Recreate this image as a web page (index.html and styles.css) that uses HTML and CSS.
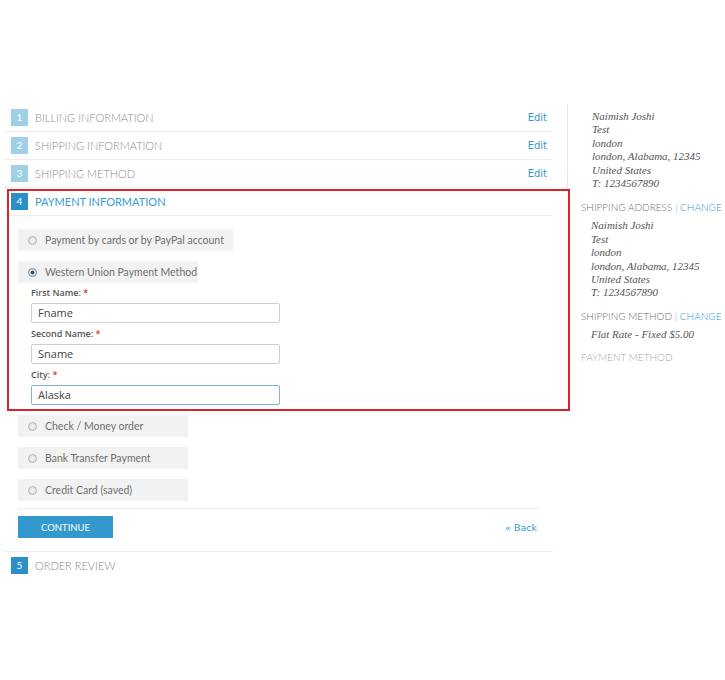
FILE: index.html
```html
<!DOCTYPE html>
<html>
<head>
<meta charset="utf-8">
<link rel="stylesheet" href="styles.css">
</head>
<body>
<div class="page">
  <div class="main">
    <div class="step done">
      <span class="num">1</span><span class="title">Billing Information</span><a class="edit">Edit</a>
    </div>
    <div class="step done">
      <span class="num">2</span><span class="title">Shipping Information</span><a class="edit">Edit</a>
    </div>
    <div class="step done">
      <span class="num">3</span><span class="title">Shipping Method</span><a class="edit">Edit</a>
    </div>
    <div class="step active">
      <span class="num">4</span><span class="title">Payment Information</span>
    </div>
    <div class="payment">
      <div class="methods">
        <div class="option wide"><span class="radio"></span>Payment by cards or by PayPal account</div>
        <div class="option mid"><span class="radio on"></span>Western Union Payment Method</div>
        <div class="fields">
          <div class="field">
            <label>First Name: <em>*</em></label>
            <div class="input">Fname</div>
          </div>
          <div class="field">
            <label>Second Name: <em>*</em></label>
            <div class="input">Sname</div>
          </div>
          <div class="field">
            <label>City: <em>*</em></label>
            <div class="input focus">Alaska</div>
          </div>
        </div>
        <div class="option"><span class="radio"></span>Check / Money order</div>
        <div class="option"><span class="radio"></span>Bank Transfer Payment</div>
        <div class="option"><span class="radio"></span>Credit Card (saved)</div>
      </div>
      <div class="actions">
        <button class="continue">Continue</button>
        <a class="back">« Back</a>
      </div>
    </div>
    <div class="step active last">
      <span class="num">5</span><span class="title grey">Order Review</span>
    </div>
  </div>
  <div class="side">
    <address class="addr first">Naimish Joshi<br>Test<br>london<br>london, Alabama, 12345<br>United States<br>T: 1234567890</address>
    <div class="shead">Shipping Address <span class="bar">|</span> <a>Change</a></div>
    <address class="addr">Naimish Joshi<br>Test<br>london<br>london, Alabama, 12345<br>United States<br>T: 1234567890</address>
    <div class="shead">Shipping Method <span class="bar">|</span> <a>Change</a></div>
    <address class="addr">Flat Rate - Fixed $5.00</address>
    <div class="shead light">Payment Method</div>
  </div>
  <div class="highlight"></div>
</div>
</body>
</html>
```
FILE: styles.css
```css
* { box-sizing: border-box; }
body {
  margin: 0;
  background: #fff;
  font-family: Lato, "Open Sans", sans-serif;
}
.page {
  position: relative;
  display: flex;
  padding-top: 104px;
  width: 725px;
  height: 680px;
}
.main {
  margin-left: 4px;
  width: 549px;
  flex: none;
}
.step {
  display: flex;
  align-items: center;
  height: 28px;
  padding-left: 7px;
  border-bottom: 1px solid #eeeeee;
}
.num {
  width: 17px;
  height: 17px;
  background: #9fd0e6;
  color: #fff;
  font-size: 10px;
  line-height: 17px;
  text-align: center;
  margin-right: 7px;
}
.step.active .num { background: #2b8fc9; }
.title {
  flex: 1;
  text-transform: uppercase;
  font-size: 11px;
  font-weight: 300;
  color: #8c8c8c;
  letter-spacing: 0;
}
.step.active .title { color: #3a9bd0; font-weight: 400; }
.step.active .title.grey { color: #888; font-weight: 300; }
.edit {
  font-family: "DejaVu Sans", sans-serif;
  font-size: 10px;
  color: #3399cc;
  margin-right: 6px;
}
.step.last { border-bottom: none; border-top: 1px solid #eeeeee; height: 27px; }
.payment {
  padding: 13px 13px 0 14px;
}
.methods {
  display: flex;
  flex-direction: column;
  align-items: flex-start;
  gap: 10px;
}
.option {
  display: flex;
  align-items: center;
  height: 22px;
  width: 170px;
  padding-left: 10px;
  background: #f2f2f2;
  font-size: 10.5px;
  color: #6f6f6f;
  white-space: nowrap;
}
.option.wide { width: 215px; }
.option.mid { width: 180px; }
.radio {
  flex: none;
  width: 9px;
  height: 9px;
  border-radius: 50%;
  border: 1px solid #b5b5b5;
  background: radial-gradient(circle, #f4f4f4 0, #dcdcdc 100%);
  margin-right: 8px;
}
.radio.on {
  border-color: #7d8b96;
  background: radial-gradient(circle, #1d5f86 0, #1d5f86 35%, #dbe2e6 45%, #dbe2e6 100%);
}
.fields {
  margin-top: -7px;
  padding-left: 13px;
  display: flex;
  flex-direction: column;
  gap: 4px;
}
.field label {
  display: block;
  font-family: "Open Sans", sans-serif;
  font-size: 9px;
  font-weight: 600;
  color: #555;
  height: 14px;
  line-height: 14px;
}
.field label em { color: #e03030; font-style: normal; }
.input {
  width: 249px;
  height: 20px;
  border: 1px solid #cfcfcf;
  border-radius: 2px;
  padding-left: 6px;
  font-family: "Open Sans", sans-serif;
  font-size: 11px;
  line-height: 18px;
  color: #444;
  margin-top: 3px;
}
.input.focus { border-color: #7fb6d6; }
.fields + .option { margin-top: 0; }
.actions {
  display: flex;
  align-items: center;
  justify-content: space-between;
  margin-top: 7px;
  border-top: 1px solid #eeeeee;
  width: 522px;
  padding: 7px 3px 13px 0;
}
.continue {
  width: 95px;
  height: 22px;
  border: none;
  background: #3399cc;
  color: #fff;
  font-family: Lato, sans-serif;
  font-size: 9.5px;
  text-transform: uppercase;
  padding: 0;
}
.back {
  font-family: "DejaVu Sans", sans-serif;
  font-size: 9.5px;
  color: #3399cc;
}
.side {
  margin-left: 14px;
  flex: 1;
}
.addr {
  display: block;
  font-family: "Liberation Serif", serif;
  font-style: italic;
  font-size: 11px;
  line-height: 13.4px;
  color: #555;
  padding-left: 24px;
}
.addr.first {
  border-left: 1px solid #e6e6e6;
  padding-top: 6px;
  padding-bottom: 1px;
}
.shead {
  text-transform: uppercase;
  font-size: 10px;
  font-weight: 300;
  line-height: 13px;
  color: #6f6f6f;
  padding-left: 14px;
  margin: 10px 0 5px;
}
.shead a { color: #3399cc; }
.shead .bar { color: #999; }
.shead.light { color: #aaa; }
.highlight {
  position: absolute;
  left: 7px;
  top: 189px;
  width: 563px;
  height: 222px;
  border: 2px solid #d9232d;
  pointer-events: none;
}
```
